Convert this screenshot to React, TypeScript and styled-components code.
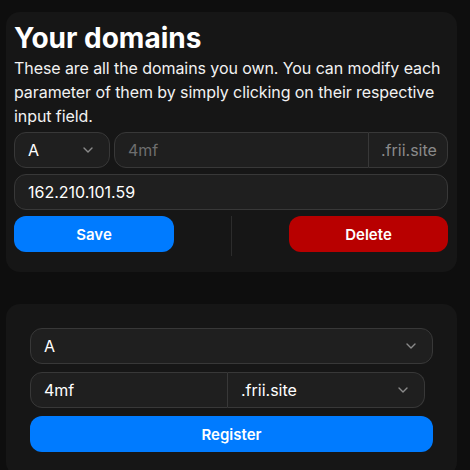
import * as React from 'react'
import styled, { createGlobalStyle } from 'styled-components'

const GlobalStyle = createGlobalStyle`
	body {
		margin: 0;
		background: #0e0e0e;
		font-family: Inter, "Noto Sans", sans-serif;
		color: #fff;
	}
`

const Page = styled.div`
	display: flex;
	flex-direction: column;
	gap: 32px;
	padding: 12px 13px 0 6px;
`

interface ICardProps {
	pad: string
}

const Card = styled.div`
	background: #161616;
	border-radius: 14px;
	padding: ${(p: ICardProps) => p.pad};
	display: flex;
	flex-direction: column;
`

const Title = styled.h1`
	margin: 0;
	font-size: 28px;
	font-weight: 700;
	line-height: 36px;
`

const Text = styled.p`
	margin: 0 0 4px;
	font-size: 16px;
	line-height: 24px;
	letter-spacing: -0.08px;
	color: #f2f2f2;
`

interface IStackProps {
	gap: number
}

const Stack = styled.div`
	display: flex;
	flex-direction: column;
	gap: ${(p: IStackProps) => p.gap}px;
`

interface IRowProps {
	gap: number
	right?: number
	grow?: boolean
}

const Row = styled.div`
	display: flex;
	gap: ${(p: IRowProps) => p.gap}px;
	margin-right: ${(p: IRowProps) => p.right || 0}px;
	flex: ${(p: IRowProps) => (p.grow ? '1 1 0' : 'none')};
	min-width: 0;
`

interface IFieldProps {
	w?: number
	grow?: boolean
	muted?: boolean
	joinLeft?: boolean
	joinRight?: boolean
}

const Field = styled.div`
	height: 36px;
	box-sizing: border-box;
	display: flex;
	align-items: center;
	justify-content: space-between;
	padding: 0 16px 0 13px;
	background: #1f1f1f;
	border: 1px solid #383838;
	border-radius: ${(p: IFieldProps) =>
		p.joinLeft ? '0 12px 12px 0' : p.joinRight ? '12px 0 0 12px' : '12px'};
	border-left-width: ${(p: IFieldProps) => (p.joinLeft ? 0 : 1)}px;
	font-size: 16px;
	color: ${(p: IFieldProps) => (p.muted ? '#6e6e6e' : '#fff')};
	flex: ${(p: IFieldProps) => (p.w ? `0 0 ${p.w}px` : p.grow ? '1 1 0' : 'none')};
	min-width: 0;
`

const Suffix = styled(Field)`
	color: #8a8a8a;
	padding: 0 12px;
`

const Actions = styled.div`
	display: flex;
	align-items: flex-start;
	justify-content: space-between;
	height: 40px;
`

const Divider = styled.div`
	width: 1px;
	height: 40px;
	background: #2c2c2c;
`

interface IButtonProps {
	tone: 'blue' | 'red'
	w?: number
}

const Button = styled.button`
	height: 36px;
	border: none;
	border-radius: 12px;
	background: ${(p: IButtonProps) => (p.tone === 'blue' ? '#007bff' : '#b80000')};
	color: #fff;
	font-family: Inter, sans-serif;
	font-size: 15px;
	font-weight: 600;
	width: ${(p: IButtonProps) => (p.w ? `${p.w}px` : '100%')};
	flex: none;
	cursor: pointer;
`

const Chevron = () => (
	<svg width="10" height="6" viewBox="0 0 10 6" fill="none">
		<path d="M1 1l4 4 4-4" stroke="#8a8a8a" strokeWidth="1.4" strokeLinecap="round" strokeLinejoin="round" />
	</svg>
)

export default function App() {
	return (
		<>
			<GlobalStyle />
			<Page>
				<Card pad="8px 9px 16px 8px">
					<Title>Your domains</Title>
					<Text>
						These are all the domains you own. You can modify each parameter of them by simply
						clicking on their respective input field.
					</Text>
					<Stack gap={6}>
						<Row gap={4}>
							<Field w={96}>
								A <Chevron />
							</Field>
							<Row gap={0} grow>
								<Field muted grow joinRight>4mf</Field>
								<Suffix w={79} joinLeft>.frii.site</Suffix>
							</Row>
						</Row>
						<Field>162.210.101.59</Field>
						<Actions>
							<Button tone="blue" w={160}>Save</Button>
							<Divider />
							<Button tone="red" w={159}>Delete</Button>
						</Actions>
					</Stack>
				</Card>
				<Card pad="24px">
					<Stack gap={8}>
						<Field>
							A <Chevron />
						</Field>
						<Row gap={0} right={8}>
							<Field grow joinRight>4mf</Field>
							<Field grow joinLeft>
								.frii.site <Chevron />
							</Field>
						</Row>
						<Button tone="blue">Register</Button>
					</Stack>
				</Card>
			</Page>
		</>
	)
}
